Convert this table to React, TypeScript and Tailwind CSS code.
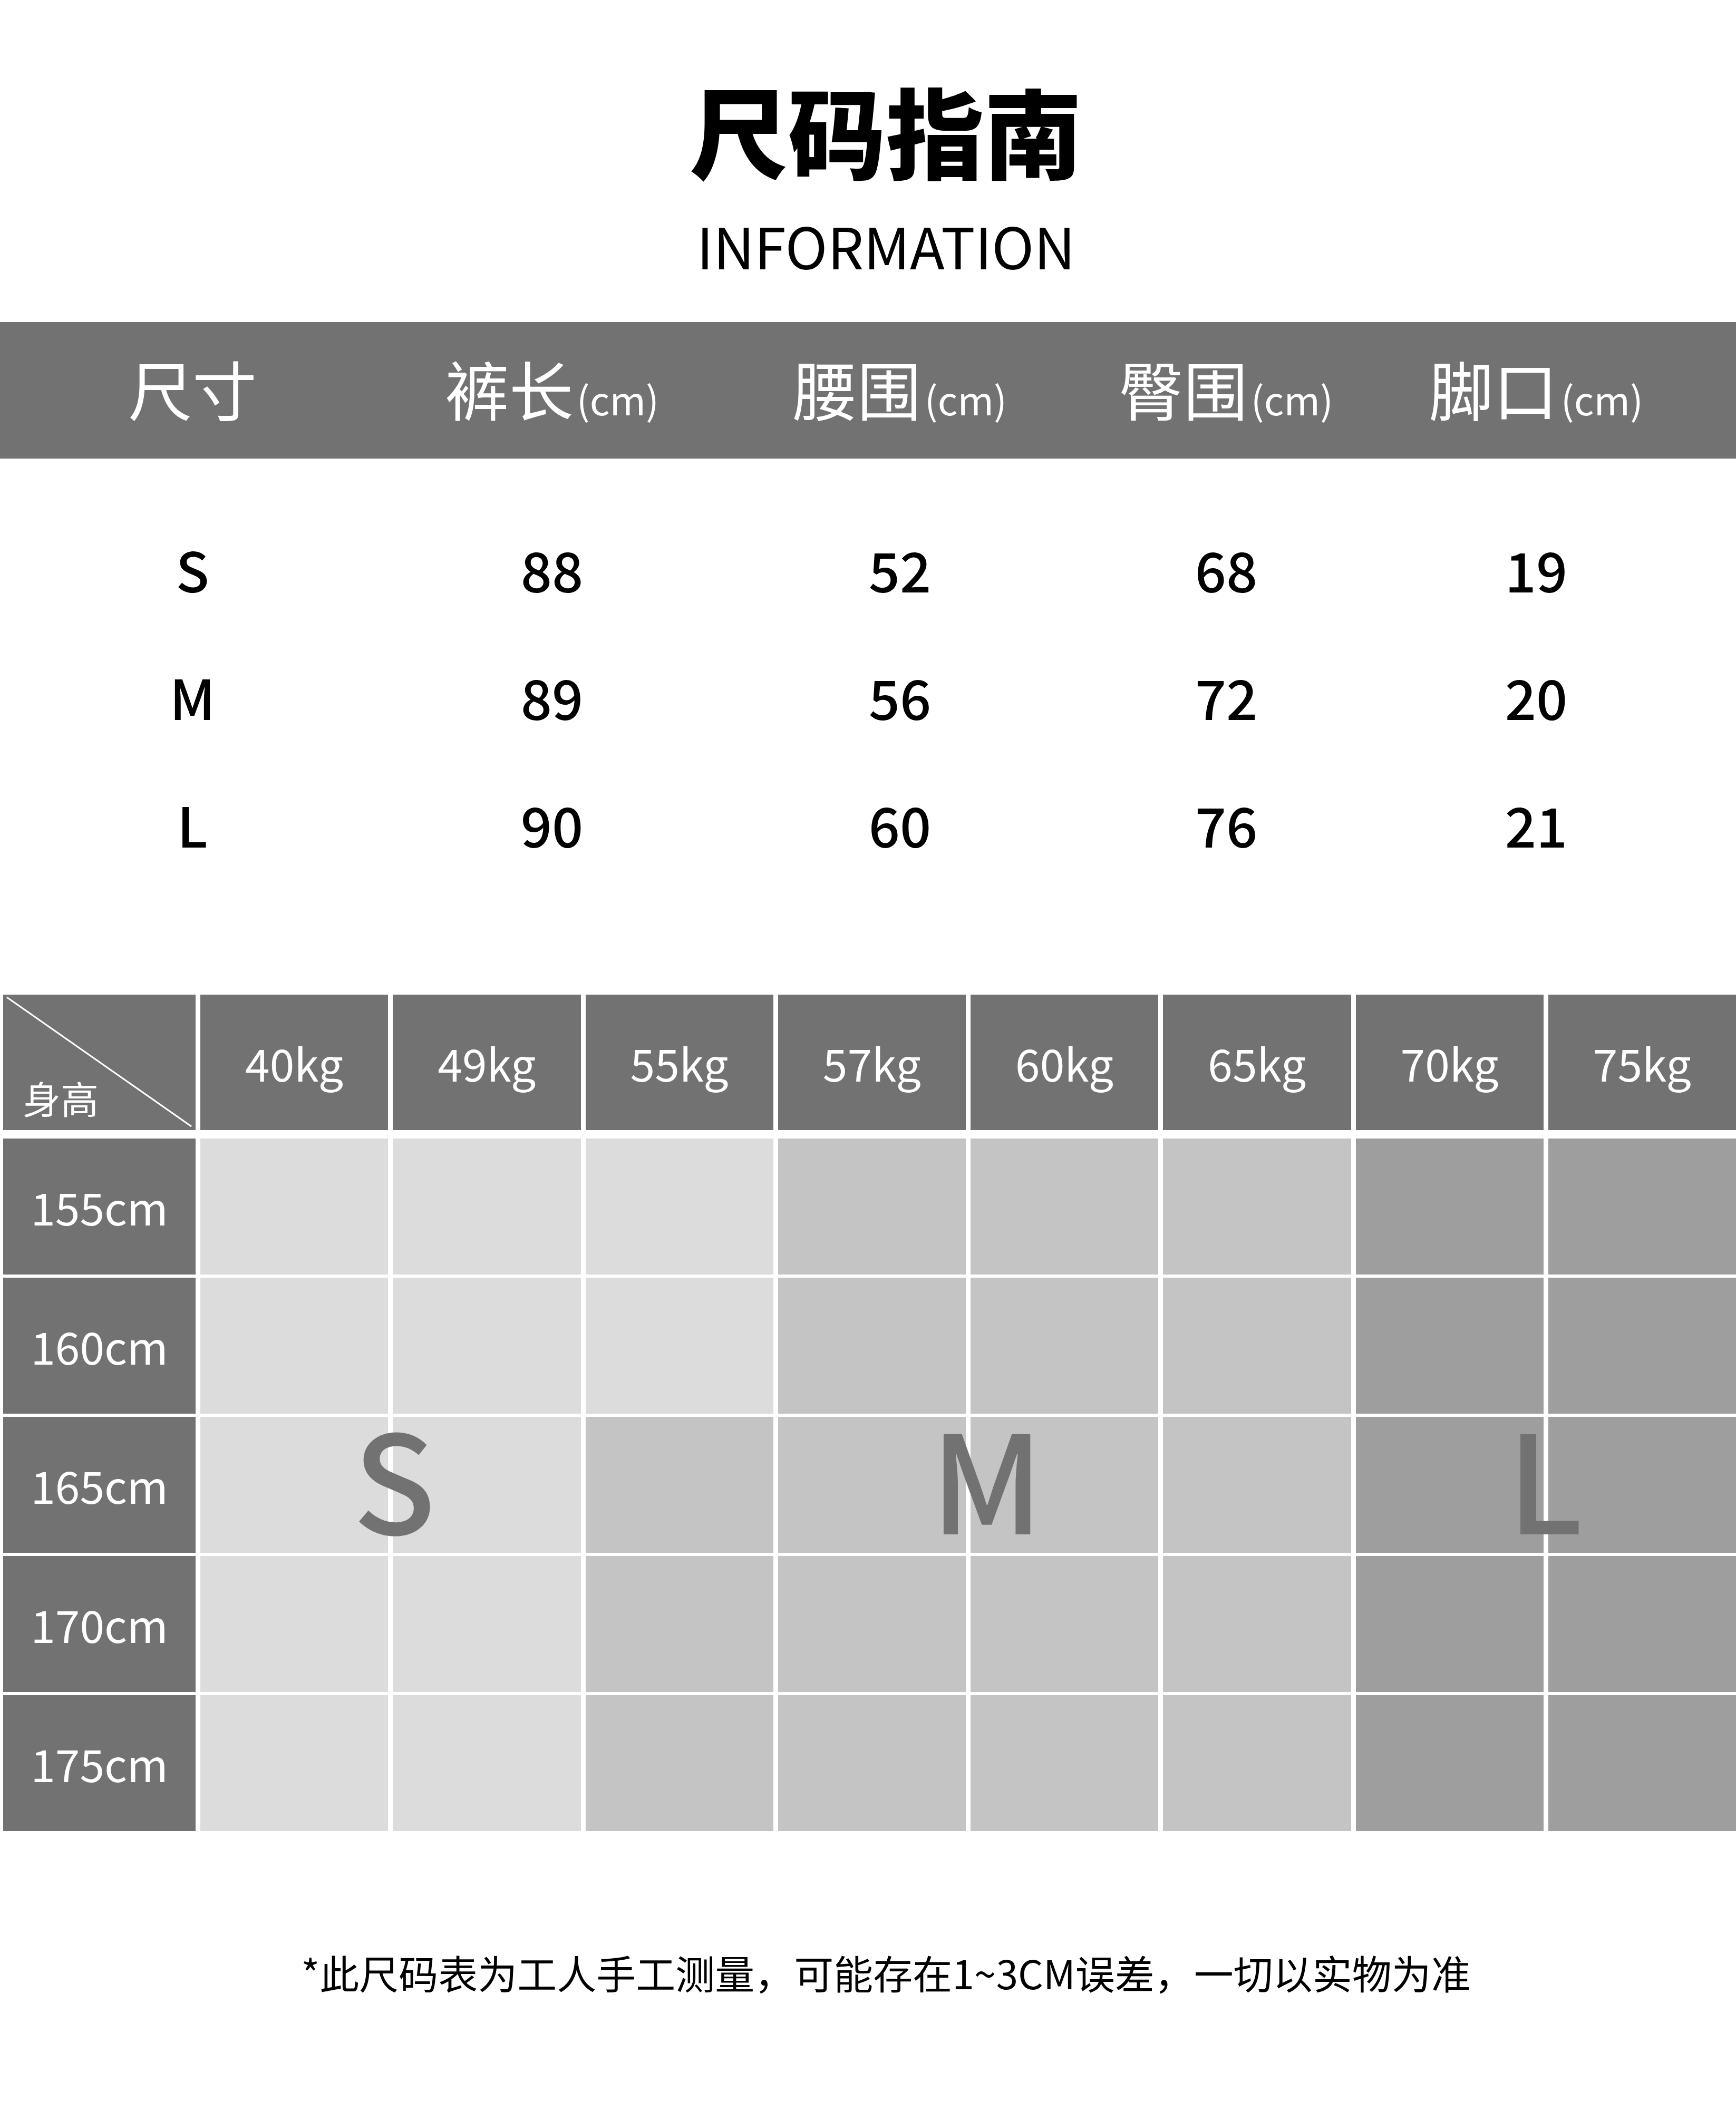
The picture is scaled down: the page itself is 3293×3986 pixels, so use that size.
const font = "font-['Noto_Sans_CJK_SC','Noto_Sans',sans-serif]";

const heads = [
  { zh: '尺寸', unit: false },
  { zh: '裤长', unit: true },
  { zh: '腰围', unit: true },
  { zh: '臀围', unit: true },
  { zh: '脚口', unit: true },
];

const sizes = [
  ['S', '88', '52', '68', '19'],
  ['M', '89', '56', '72', '20'],
  ['L', '90', '60', '76', '21'],
];

const weights = ['40kg', '49kg', '55kg', '57kg', '60kg', '65kg', '70kg', '75kg'];
const heights = ['155cm', '160cm', '165cm', '170cm', '175cm'];

// l = light, m = mid, d = dark
const shade = [
  'lllmmmdd',
  'lllmmmdd',
  'llmmmmdd',
  'llmmmmdd',
  'llmmmmdd',
];

const tone: Record<string, string> = {
  l: 'bg-[#dcdcdc]',
  m: 'bg-[#c4c4c4]',
  d: 'bg-[#9e9e9e]',
};

const measureCols = 'grid grid-cols-[730px_634px_686px_552px_624px_1fr]';

export default function App() {
  return (
    <div className={`${font} w-[3293px] h-[3986px] bg-white text-black`}>
      {/* Title */}
      <div className="pl-[68px] pt-[152px] text-center">
        <h1 className="text-[186px] font-black leading-none">尺码指南</h1>
        <p className="mt-[72px] text-[108px] leading-none">INFORMATION</p>
      </div>

      {/* Measurement header */}
      <div className={`${measureCols} mt-[93px] h-[259px] bg-[#727272] text-white`}>
        {heads.map((h) => (
          <div key={h.zh} className="flex items-center justify-center pb-[12px]">
            <span className="flex items-baseline">
              <span className="text-[122px] leading-none">{h.zh}</span>
              {h.unit && <span className="ml-[6px] text-[74px] leading-none">(cm)</span>}
            </span>
          </div>
        ))}
      </div>

      {/* Measurement rows */}
      <div className="pt-[88px]">
        {sizes.map((row) => (
          <div key={row[0]} className={`${measureCols} h-[242px]`}>
            {row.map((v, i) => (
              <div key={i} className="flex items-center justify-center text-[104px] font-medium leading-none">
                {v}
              </div>
            ))}
          </div>
        ))}
      </div>

      {/* Height / weight grid */}
      <div className="ml-[6px] mt-[203px]">
        <div className="grid grid-cols-[365px_repeat(8,minmax(0,1fr))] gap-x-[9px] h-[257px] text-white">
          <div className="relative bg-[#727272] flex items-end pl-[37px] pb-[26px]">
            <svg className="absolute inset-0 w-full h-full" viewBox="0 0 365 257" preserveAspectRatio="none">
              <line x1="7" y1="5" x2="357" y2="250" stroke="white" strokeWidth="3" />
            </svg>
            <span className="relative text-[72px] leading-none">身高</span>
          </div>
          {weights.map((w) => (
            <div key={w} className="bg-[#727272] flex items-center justify-center text-[84px] leading-none">
              {w}
            </div>
          ))}
        </div>

        <div className="relative mt-[16px] flex flex-col gap-y-[6px]">
          {heights.map((h, r) => (
            <div key={h} className="grid grid-cols-[365px_repeat(8,minmax(0,1fr))] gap-x-[9px] h-[258px]">
              <div className="bg-[#727272] text-white flex items-center justify-center text-[84px] leading-none">
                {h}
              </div>
              {shade[r].split('').map((s, c) => (
                <div key={c} className={tone[s]} />
              ))}
            </div>
          ))}

          {/* size letters laid over the grid */}
          <div className="absolute left-0 right-0 top-[510px] h-[258px] text-[#727272] text-[258px] font-medium leading-none">
            <span className="absolute left-[742px] top-1/2 -translate-x-1/2 -translate-y-1/2">S</span>
            <span className="absolute left-[1866px] top-1/2 -translate-x-1/2 -translate-y-1/2">M</span>
            <span className="absolute left-[2925px] top-1/2 -translate-x-1/2 -translate-y-1/2">L</span>
          </div>
        </div>
      </div>

      {/* Footnote */}
      <p className="pl-[68px] mt-[230px] text-center text-[75px] leading-none">
        *此尺码表为工人手工测量，可能存在1~3CM误差，一切以实物为准
      </p>
    </div>
  );
}
